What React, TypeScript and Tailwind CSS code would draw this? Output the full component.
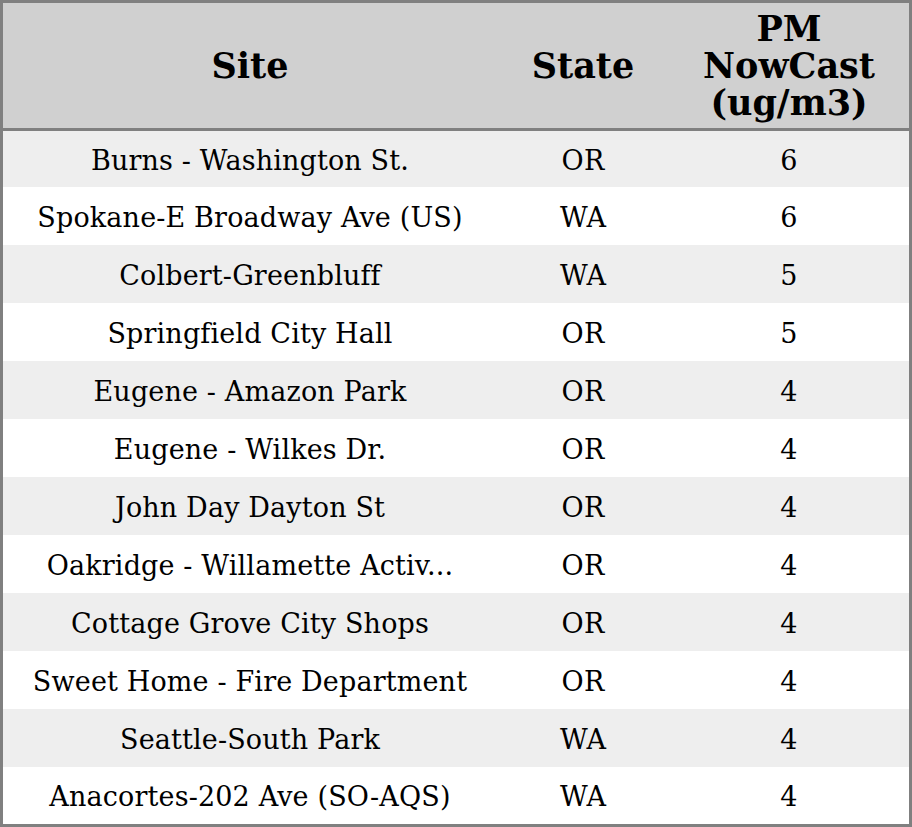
const rows: [string, string, number][] = [
  ['Burns - Washington St.', 'OR', 6],
  ['Spokane-E Broadway Ave (US)', 'WA', 6],
  ['Colbert-Greenbluff', 'WA', 5],
  ['Springfield City Hall', 'OR', 5],
  ['Eugene - Amazon Park', 'OR', 4],
  ['Eugene - Wilkes Dr.', 'OR', 4],
  ['John Day Dayton St', 'OR', 4],
  ['Oakridge - Willamette Activ...', 'OR', 4],
  ['Cottage Grove City Shops', 'OR', 4],
  ['Sweet Home - Fire Department', 'OR', 4],
  ['Seattle-South Park', 'WA', 4],
  ['Anacortes-202 Ave (SO-AQS)', 'WA', 4],
];

export default function App() {
  return (
    <div
      className="w-[912px] h-[827px] border-[3px] border-[#808080] bg-white text-black flex flex-col"
      style={{ fontFamily: '"DejaVu Serif", serif' }}
    >
      {/* Header */}
      <div className="h-[128px] shrink-0 flex bg-[#d0d0d0] border-b-[3px] border-[#808080] font-bold text-[35px] leading-[37px]">
        <div className="w-[494px] flex items-center justify-center">Site</div>
        <div className="w-[172px] flex items-center justify-center">State</div>
        <div className="flex-1 flex items-center justify-center text-center">
          PM
          <br />
          NowCast
          <br />
          (ug/m3)
        </div>
      </div>

      {/* Rows */}
      {rows.map(([site, state, value], i) => (
        <div
          key={site}
          className={`flex items-center pt-1 text-[27px] tracking-[0.15px] ${i % 2 === 0 ? 'bg-[#eeeeee]' : 'bg-white'} ${
            i === 0 || i === rows.length - 1 ? 'h-[56px]' : 'h-[58px]'
          }`}
        >
          <div className="w-[494px] text-center whitespace-nowrap">{site}</div>
          <div className="w-[172px] text-center">{state}</div>
          <div className="flex-1 text-center">{value}</div>
        </div>
      ))}
    </div>
  );
}
